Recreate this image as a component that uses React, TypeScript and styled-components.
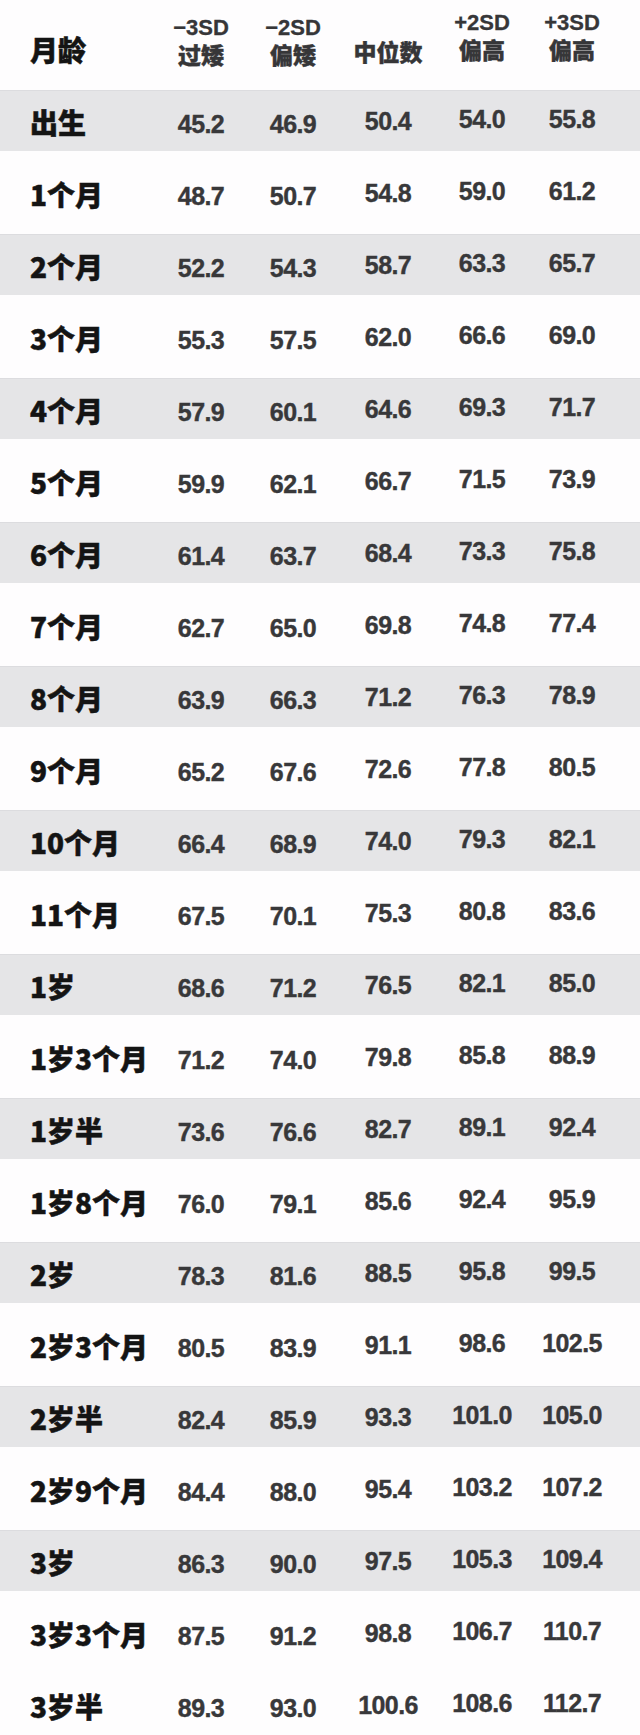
import React from 'react';
import styled, { createGlobalStyle } from 'styled-components';

const GlobalStyle = createGlobalStyle`
  html, body {
    margin: 0;
    padding: 0;
    background: #fefdfe;
  }
`;

const COLS = '156px 90px 94px 96px 92px 88px 1fr';
// small vertical drift of each value column, as in the scanned table
const SHIFT = [3, 3, 0, -2, -2];

const Table = styled.div`
  width: 640px;
  display: flex;
  flex-direction: column;
  background: #fefdfe;
`;

const HeadRow = styled.div`
  display: grid;
  grid-template-columns: ${COLS};
  height: 90px;
`;

const HeadLabel = styled.div`
  display: flex;
  align-items: flex-end;
  padding: 0 0 25px 30px;
  font-family: 'Noto Sans CJK SC', sans-serif;
  font-weight: 900;
  font-size: 28px;
  line-height: 32px;
  color: #141414;
  -webkit-text-stroke: 0.5px #141414;
`;

const HeadCell = styled.div<{ $shift: number }>`
  display: flex;
  flex-direction: column;
  align-items: center;
  justify-content: flex-end;
  padding-bottom: ${p => 25 - p.$shift}px;
  color: #363638;
`;

const SdLine = styled.span`
  font-family: 'Liberation Sans', Arial, sans-serif;
  font-weight: 700;
  font-size: 22px;
  line-height: 25px;
  -webkit-text-stroke: 0.3px #363638;
`;

const CnLine = styled.span`
  font-family: 'Noto Sans CJK SC', sans-serif;
  font-weight: 900;
  font-size: 23px;
  line-height: 28px;
  -webkit-text-stroke: 0.4px #363638;
`;

const Row = styled.div<{ $shade: boolean; $tall: boolean }>`
  display: grid;
  grid-template-columns: ${COLS};
  align-items: center;
  height: ${p => (p.$tall ? 83 : 61)}px;
  background: ${p => (p.$shade ? '#e5e5e7' : 'transparent')};
  box-shadow: ${p => (p.$shade ? 'inset 0 1px 0 #dcdcdf' : 'none')};
`;

const Label = styled.div`
  padding: 3px 0 0 30px;
  font-family: 'Noto Sans CJK SC', sans-serif;
  font-weight: 900;
  font-size: 28px;
  line-height: 32px;
  color: #141414;
  -webkit-text-stroke: 0.5px #141414;
  white-space: nowrap;
`;

const Value = styled.div<{ $shift: number }>`
  text-align: center;
  font-family: 'Liberation Sans', Arial, sans-serif;
  font-weight: 700;
  font-size: 25px;
  line-height: 28px;
  letter-spacing: -0.6px;
  color: #38383a;
  -webkit-text-stroke: 0.4px #38383a;
  ${p => (p.$shift > 0 ? `padding-top: ${p.$shift * 2}px;` : `padding-bottom: ${-p.$shift * 2}px;`)}
`;

const heads: [string, string][] = [
  ['−3SD', '过矮'],
  ['−2SD', '偏矮'],
  ['', '中位数'],
  ['+2SD', '偏高'],
  ['+3SD', '偏高'],
];

const data: [string, string, string, string, string, string][] = [
  ['出生', '45.2', '46.9', '50.4', '54.0', '55.8'],
  ['1个月', '48.7', '50.7', '54.8', '59.0', '61.2'],
  ['2个月', '52.2', '54.3', '58.7', '63.3', '65.7'],
  ['3个月', '55.3', '57.5', '62.0', '66.6', '69.0'],
  ['4个月', '57.9', '60.1', '64.6', '69.3', '71.7'],
  ['5个月', '59.9', '62.1', '66.7', '71.5', '73.9'],
  ['6个月', '61.4', '63.7', '68.4', '73.3', '75.8'],
  ['7个月', '62.7', '65.0', '69.8', '74.8', '77.4'],
  ['8个月', '63.9', '66.3', '71.2', '76.3', '78.9'],
  ['9个月', '65.2', '67.6', '72.6', '77.8', '80.5'],
  ['10个月', '66.4', '68.9', '74.0', '79.3', '82.1'],
  ['11个月', '67.5', '70.1', '75.3', '80.8', '83.6'],
  ['1岁', '68.6', '71.2', '76.5', '82.1', '85.0'],
  ['1岁3个月', '71.2', '74.0', '79.8', '85.8', '88.9'],
  ['1岁半', '73.6', '76.6', '82.7', '89.1', '92.4'],
  ['1岁8个月', '76.0', '79.1', '85.6', '92.4', '95.9'],
  ['2岁', '78.3', '81.6', '88.5', '95.8', '99.5'],
  ['2岁3个月', '80.5', '83.9', '91.1', '98.6', '102.5'],
  ['2岁半', '82.4', '85.9', '93.3', '101.0', '105.0'],
  ['2岁9个月', '84.4', '88.0', '95.4', '103.2', '107.2'],
  ['3岁', '86.3', '90.0', '97.5', '105.3', '109.4'],
  ['3岁3个月', '87.5', '91.2', '98.8', '106.7', '110.7'],
  ['3岁半', '89.3', '93.0', '100.6', '108.6', '112.7'],
];

const App = () => {
  return (
    <>
      <GlobalStyle />
      <Table>
        <HeadRow>
          <HeadLabel>月龄</HeadLabel>
          {heads.map(([sd, cn], i) => (
            <HeadCell key={i} $shift={SHIFT[i]}>
              {sd && <SdLine>{sd}</SdLine>}
              <CnLine>{cn}</CnLine>
            </HeadCell>
          ))}
        </HeadRow>
        {data.map(([label, ...vals], i) => (
          <Row key={label} $shade={i % 2 === 0 && i < data.length - 1} $tall={i % 2 === 1}>
            <Label>{label}</Label>
            {vals.map((v, j) => (
              <Value key={j} $shift={SHIFT[j]}>{v}</Value>
            ))}
          </Row>
        ))}
      </Table>
    </>
  );
};

export default App;
